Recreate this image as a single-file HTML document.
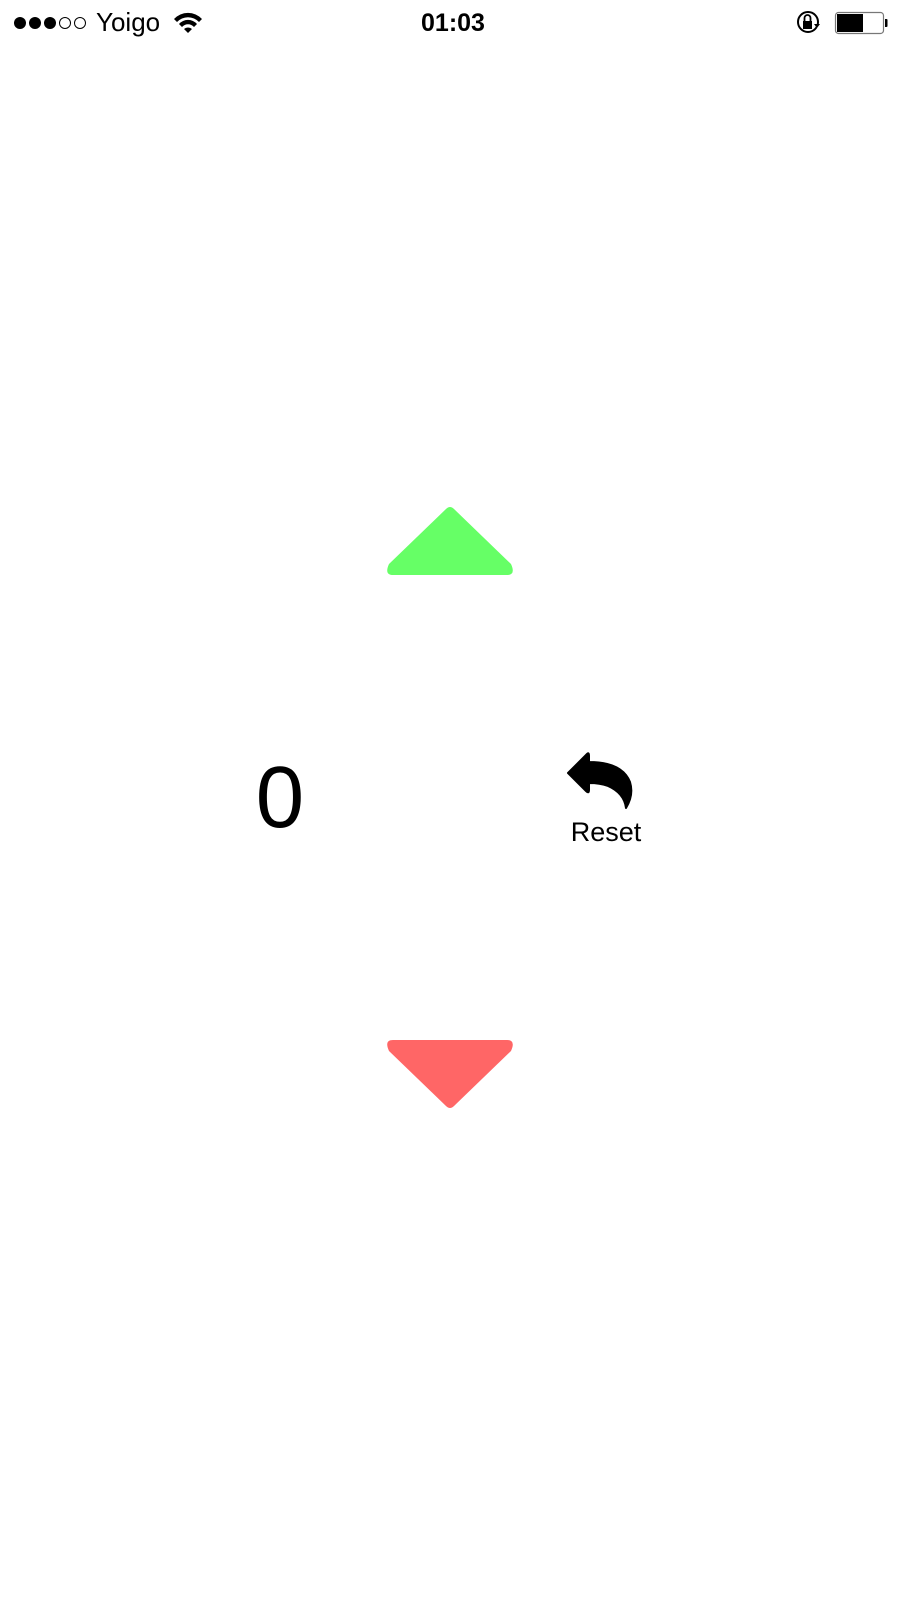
<!DOCTYPE html>
<html><head><meta charset="utf-8"><style>
html,body{margin:0;padding:0;background:#fff;width:900px;height:1600px;overflow:hidden;position:relative;font-family:"Liberation Sans",sans-serif;color:#000}
.abs{position:absolute}
</style></head><body>
<svg class="abs" style="left:0;top:0" width="900" height="45">
  <g fill="#000"><circle cx="20" cy="23" r="6"/><circle cx="35" cy="23" r="6"/><circle cx="50" cy="23" r="6"/></g>
  <g fill="none" stroke="#000" stroke-width="1"><circle cx="65" cy="23" r="5.5"/><circle cx="80" cy="23" r="5.5"/></g>
  <text x="96" y="31" font-family="Liberation Sans" font-size="26">Yoigo</text>
  <g fill="#000">
    <path d="M174 19 A19 19 0 0 1 202 19 L199 22 A15 15 0 0 0 177 22 Z"/>
    <path d="M179 24 A12 12 0 0 1 197 24 L194 27 A8 8 0 0 0 182 27 Z"/>
    <path d="M184 29 A6 6 0 0 1 192 29 L188 33 Z"/>
  </g>
  <text x="453" y="31" text-anchor="middle" font-family="Liberation Sans" font-weight="bold" font-size="25">01:03</text>
  <circle cx="808" cy="22" r="10" fill="none" stroke="#000" stroke-width="2"/>
  <path d="M815 25 l5 -1 l-2 5 z" fill="#fff"/>
  <path d="M814 24 l6 0 l-3 4 z" fill="#000"/>
  <rect x="803" y="21" width="9" height="8" fill="#000"/>
  <path d="M804.5 21 v-3 a3 3 0 0 1 6 0 v3" fill="none" stroke="#000" stroke-width="1.8"/>
  <rect x="835.5" y="12.5" width="48" height="21" rx="3" fill="none" stroke="#777" stroke-width="1.2"/>
  <rect x="837" y="14" width="26" height="18" fill="#000"/>
  <path d="M885 19 h1.5 a1 1 0 0 1 1 1 v6 a1 1 0 0 1 -1 1 h-1.5z" fill="#000"/>
</svg>
<svg class="abs" style="left:380px;top:500px" width="140" height="85">
  <path d="M66 9 Q70 5 74 9 L131 64 Q136 75 127 75 L13 75 Q4 75 9 64 Z" fill="#66ff66"/>
</svg>
<svg class="abs" style="left:380px;top:1035px" width="140" height="85">
  <path d="M66 71 Q70 75 74 71 L131 16 Q136 5 127 5 L13 5 Q4 5 9 16 Z" fill="#ff6666"/>
</svg>
<div class="abs" style="left:240px;top:748px;width:80px;text-align:center;font-size:87px;line-height:100px">0</div>
<svg class="abs" style="left:550px;top:740px" width="100" height="80">
  <path d="M18 33 L37 14 Q39 12 39 16 L39 22 Q72 22 80 42 Q84 55 76 68 Q74 53 58 46 Q50 43 39 43 L39 50 Q39 54 36 51 Z" fill="#000" stroke="#000" stroke-width="2" stroke-linejoin="round"/>
</svg>
<div class="abs" style="left:556px;top:814px;width:100px;text-align:center;font-size:27px;line-height:36px">Reset</div>
</body></html>
